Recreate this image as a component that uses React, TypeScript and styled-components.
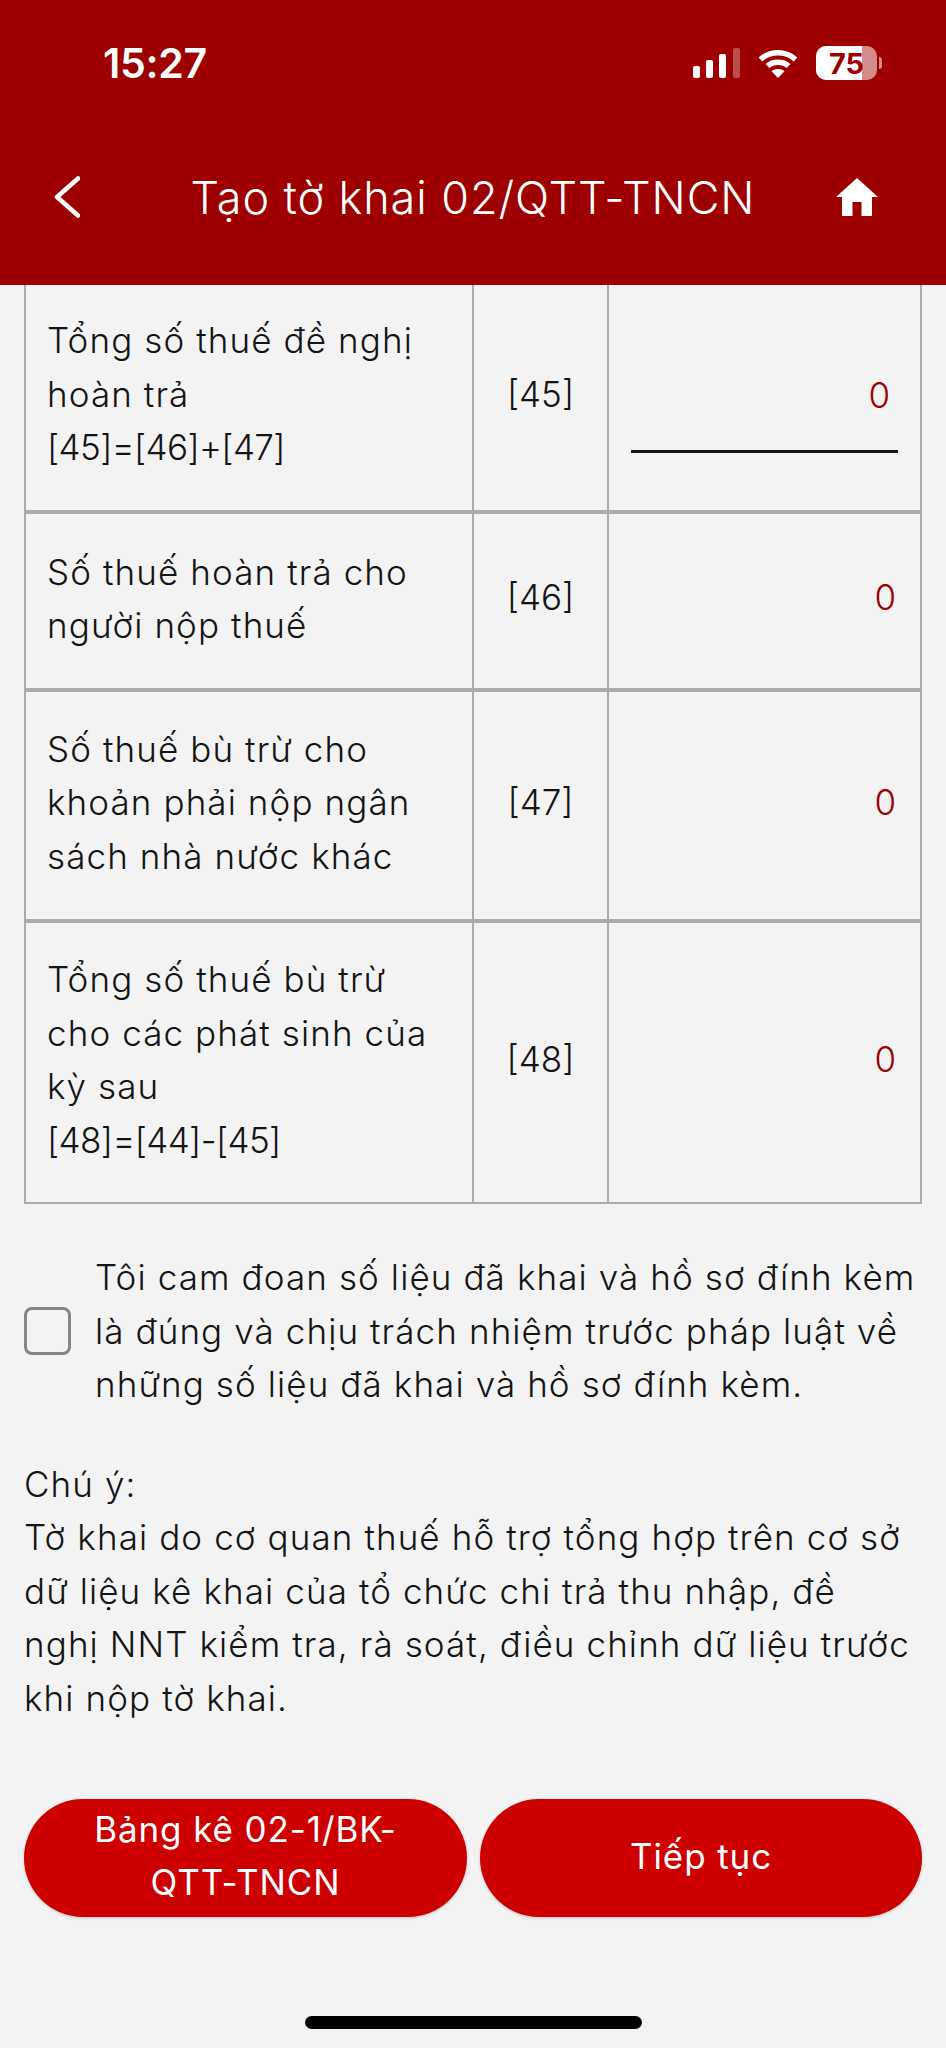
import styled, { createGlobalStyle } from "styled-components";

const FONT = `"Inter", "Noto Sans", "Liberation Sans", sans-serif`;

const GlobalStyle = createGlobalStyle`
  html, body {
    margin: 0;
    padding: 0;
    background: #f3f3f3;
  }
  * {
    box-sizing: border-box;
  }
`;

const Page = styled.div`
  width: 946px;
  height: 2048px;
  display: flex;
  flex-direction: column;
  overflow: hidden;
  background: #f3f3f3;
  color: #141414;
  font-family: ${FONT};
`;

const Header = styled.header`
  height: 285px;
  flex: none;
  background: #9e0000;
  color: #fff;
  position: relative;
  z-index: 1;
  display: flex;
  flex-direction: column;
`;

const StatusBar = styled.div`
  height: 126px;
  padding: 0 64px 0 103px;
  display: flex;
  align-items: center;
  justify-content: space-between;
`;

const Time = styled.span`
  font-size: 41px;
  font-weight: 600;
  letter-spacing: -0.3px;
`;

const StatusIcons = styled.div`
  display: flex;
  align-items: center;
  gap: 18px;
`;

const Battery = styled.div`
  display: flex;
  align-items: center;
  gap: 2px;
`;

const BatteryBody = styled.div`
  width: 61px;
  height: 34px;
  border-radius: 10px;
  overflow: hidden;
  position: relative;
  background: rgba(255, 255, 255, 0.55);
`;

const BatteryFill = styled.div`
  height: 100%;
  background: #fff;
`;

const BatteryText = styled.span`
  position: absolute;
  inset: 0;
  display: flex;
  align-items: center;
  justify-content: center;
  font-size: 29px;
  font-weight: 700;
  color: #9e0000;
`;

const BatteryNub = styled.div`
  width: 3px;
  height: 12px;
  border-radius: 0 3px 3px 0;
  background: rgba(255, 255, 255, 0.55);
`;

const NavBar = styled.div`
  height: 70px;
  margin-top: 36px;
  padding: 0 68px 0 54px;
  display: flex;
  align-items: center;
  justify-content: space-between;
`;

const Title = styled.h1`
  margin: 0 0 0 30px;
  font-size: 45px;
  font-weight: 300;
  letter-spacing: 0.9px;
  white-space: nowrap;
`;

const IconButton = styled.button`
  display: flex;
  padding: 0;
  border: 0;
  background: none;
  color: #fff;
`;

const Content = styled.main`
  flex: 1;
  padding: 0 24px;
  display: flex;
  flex-direction: column;
  min-height: 0;
`;

const Table = styled.div`
  margin-top: -2px;
`;

const Row = styled.div`
  display: grid;
  grid-template-columns: 446px 135px 1fr;
  border: 2px solid #ababab;
`;

const Cell = styled.div`
  display: flex;
  align-items: center;
  font-size: 35px;
  font-weight: 300;
  line-height: 53.5px;

  & + & {
    border-left: 2px solid #ababab;
  }
`;

const LabelCell = styled(Cell)<{ $top: number; $bottom: number }>`
  display: block;
  padding: ${(p) => p.$top}px 10px ${(p) => p.$bottom}px 21px;
  letter-spacing: 1.1px;
  white-space: nowrap;
`;

const Formula = styled.div`
  letter-spacing: -0.6px;
`;

const CodeCell = styled(Cell)`
  justify-content: center;
  padding-bottom: 6px;
`;

const ValueCell = styled(Cell)`
  justify-content: flex-end;
  padding: 0 24px 6px 0;
  color: #9e0000;
`;

const InputCell = styled(Cell)`
  flex-direction: column;
  align-items: stretch;
  justify-content: center;
  padding: 0 22px;
`;

const Input = styled.div`
  height: 84px;
  margin-top: 26px;
  padding-right: 8px;
  border-bottom: 3px solid #141414;
  color: #9e0000;
  text-align: right;
`;

const Declaration = styled.label`
  margin-top: 47px;
  display: flex;
  align-items: center;
  gap: 24px;
  font-size: 35px;
  font-weight: 300;
  letter-spacing: 1.1px;
  line-height: 53.5px;
  white-space: nowrap;
`;

const Checkbox = styled.span`
  flex: none;
  width: 47px;
  height: 48px;
  border: 3px solid #858585;
  border-radius: 8px;
`;

const Note = styled.p`
  margin: 46px 0 0;
  font-size: 35px;
  font-weight: 300;
  letter-spacing: 1.1px;
  line-height: 53.5px;
  white-space: nowrap;
`;

const Actions = styled.div`
  margin-top: 74px;
  display: grid;
  grid-template-columns: 443px 442px;
  gap: 13px;
`;

const Button = styled.button`
  height: 118px;
  padding: 0 50px 4px;
  border: 0;
  border-radius: 59px;
  background: #cc0000;
  color: #fff;
  font-family: ${FONT};
  font-size: 35px;
  font-weight: 400;
  letter-spacing: 0.9px;
  line-height: 53px;
  box-shadow: 0 1px 3px rgba(0, 0, 0, 0.2);
`;

const HomeIndicator = styled.div`
  width: 337px;
  height: 13px;
  margin: 0 auto 19px;
  flex: none;
  border-radius: 7px;
  background: #000;
`;

const SignalIcon = () => (
  <svg width="47" height="30" viewBox="0 0 47 30" fill="#fff">
    <rect x="0" y="18" width="7" height="12" rx="2" />
    <rect x="13" y="12" width="7" height="18" rx="2" />
    <rect x="26" y="6" width="7" height="24" rx="2" />
    <rect x="40" y="0" width="7" height="30" rx="2" opacity="0.3" />
  </svg>
);

const WifiIcon = () => (
  <svg width="40" height="30" viewBox="0 0 40 30" fill="none" stroke="#fff" strokeWidth="5.5">
    <path d="M2.5 11.5 C12 2.5 28 2.5 37.5 11.5" />
    <path d="M9.5 18 C15 13 25 13 30.5 18" />
    <path d="M20 30 L13.5 23.2 C17 20.4 23 20.4 26.5 23.2 Z" fill="#fff" stroke="none" />
  </svg>
);

const BackIcon = () => (
  <svg width="26" height="42" viewBox="0 0 26 42" fill="none" stroke="#fff" strokeWidth="4.5" strokeLinecap="round" strokeLinejoin="round">
    <path d="M24 2.5 L3 21 L24 39.5" />
  </svg>
);

const HomeIcon = () => (
  <svg width="42" height="38" viewBox="0 0 42 38" fill="#fff">
    <path d="M21 0 L42 19 L36 19 L36 38 L25.5 38 L25.5 24 L16.5 24 L16.5 38 L6 38 L6 19 L0 19 Z" />
  </svg>
);

type TaxRow = {
  lines: string[];
  formula?: string;
  code: string;
  editable?: boolean;
  top: number;
  bottom: number;
};

const rows: TaxRow[] = [
  { lines: ["Tổng số thuế đề nghị", "hoàn trả"], formula: "[45]=[46]+[47]", code: "[45]", editable: true, top: 29, bottom: 35.5 },
  { lines: ["Số thuế hoàn trả cho", "người nộp thuế"], code: "[46]", top: 31.5, bottom: 35 },
  { lines: ["Số thuế bù trừ cho", "khoản phải nộp ngân", "sách nhà nước khác"], code: "[47]", top: 31, bottom: 36 },
  { lines: ["Tổng số thuế bù trừ", "cho các phát sinh của", "kỳ sau"], formula: "[48]=[44]-[45]", code: "[48]", top: 30, bottom: 35 },
];

const App = () => {
  const batteryLevel = 75;

  return (
    <Page>
      <GlobalStyle />
      <Header>
        <StatusBar>
          <Time>15:27</Time>
          <StatusIcons>
            <SignalIcon />
            <WifiIcon />
            <Battery>
              <BatteryBody>
                <BatteryFill style={{ width: `${batteryLevel}%` }} />
                <BatteryText>{batteryLevel}</BatteryText>
              </BatteryBody>
              <BatteryNub />
            </Battery>
          </StatusIcons>
        </StatusBar>
        <NavBar>
          <IconButton aria-label="Quay lại">
            <BackIcon />
          </IconButton>
          <Title>Tạo tờ khai 02/QTT-TNCN</Title>
          <IconButton aria-label="Trang chủ">
            <HomeIcon />
          </IconButton>
        </NavBar>
      </Header>
      <Content>
        <Table>
          {rows.map((row) => (
            <Row key={row.code}>
              <LabelCell $top={row.top} $bottom={row.bottom}>
                {row.lines.map((line) => (
                  <div key={line}>{line}</div>
                ))}
                {row.formula && <Formula>{row.formula}</Formula>}
              </LabelCell>
              <CodeCell>{row.code}</CodeCell>
              {row.editable ? (
                <InputCell>
                  <Input>0</Input>
                </InputCell>
              ) : (
                <ValueCell>0</ValueCell>
              )}
            </Row>
          ))}
        </Table>
        <Declaration>
          <Checkbox />
          <span>
            Tôi cam đoan số liệu đã khai và hồ sơ đính kèm
            <br />
            là đúng và chịu trách nhiệm trước pháp luật về
            <br />
            những số liệu đã khai và hồ sơ đính kèm.
          </span>
        </Declaration>
        <Note>
          Chú ý:
          <br />
          Tờ khai do cơ quan thuế hỗ trợ tổng hợp trên cơ sở
          <br />
          dữ liệu kê khai của tổ chức chi trả thu nhập, đề
          <br />
          nghị NNT kiểm tra, rà soát, điều chỉnh dữ liệu trước
          <br />
          khi nộp tờ khai.
        </Note>
        <Actions>
          <Button>Bảng kê 02-1/BK-QTT-TNCN</Button>
          <Button>Tiếp tục</Button>
        </Actions>
      </Content>
      <HomeIndicator />
    </Page>
  );
};

export default App;
